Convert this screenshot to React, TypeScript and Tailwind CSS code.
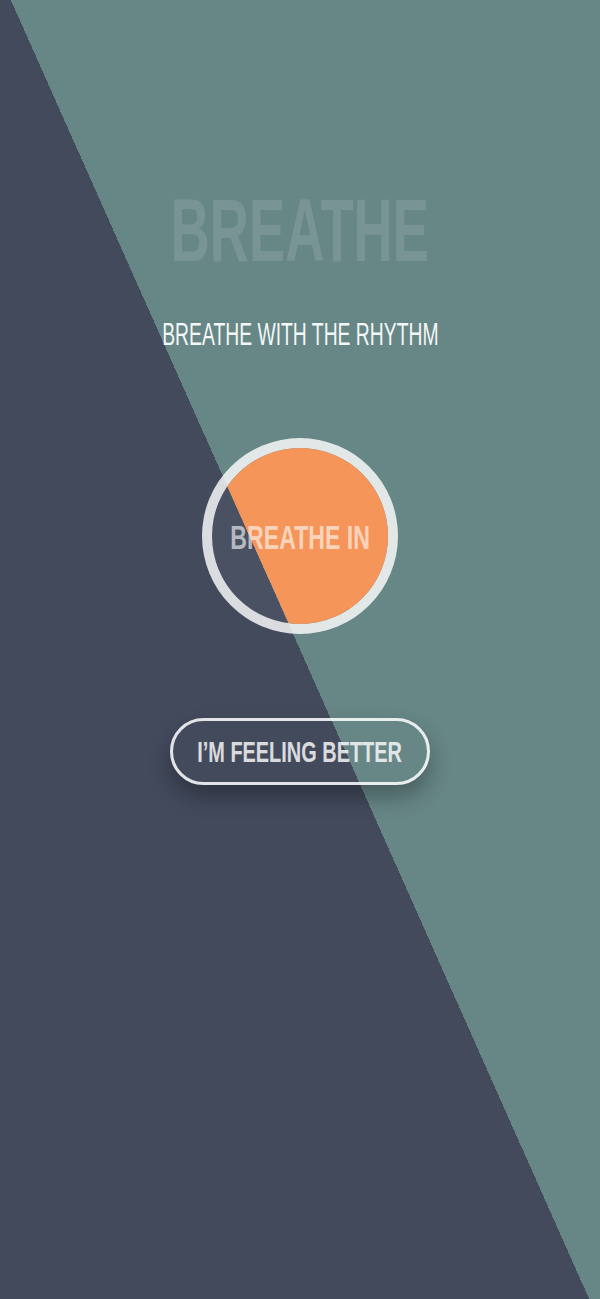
import React from 'react';

const font = { fontFamily: '"Liberation Sans", Arial, sans-serif' };

const App: React.FC = () => {
  return (
    <div
      style={font}
      className="relative h-[1299px] w-full overflow-hidden bg-[linear-gradient(66deg,#434a5c_50%,#678686_50%)] flex flex-col items-center"
    >
      {/* title */}
      <div className="mt-[186px] h-[89px] leading-none text-[89px] font-bold text-white/[0.12] scale-x-[0.61] whitespace-nowrap">
        BREATHE
      </div>

      {/* subtitle */}
      <div className="mt-[45px] h-[31px] leading-none text-[30.7px] text-[#f4f7f7] scale-x-[0.63] whitespace-nowrap">
        BREATHE WITH THE RHYTHM
      </div>

      {/* breathing circle */}
      <div className="mt-[87px] relative w-[196px] h-[196px] rounded-full border-[10px] border-white/80 bg-white/[0.04] flex items-center justify-center">
        <div className="absolute inset-0 rounded-full bg-[#f5955a] [clip-path:polygon(-2px_0,100%_0,100%_100%,77px_100%)]" />
        <span className="relative mt-[4px] leading-none text-[33.5px] font-bold text-white/60 scale-x-[0.69] whitespace-nowrap">
          BREATHE IN
        </span>
      </div>

      {/* button */}
      <button className="mt-[84px] w-[260px] h-[67px] rounded-full border-[3px] border-white/85 shadow-[0_12px_22px_rgba(0,0,0,0.3)] flex items-center justify-center">
        <span className="leading-none text-[29.3px] font-bold text-white/80 scale-x-[0.68] whitespace-nowrap">
          I’M FEELING BETTER
        </span>
      </button>
    </div>
  );
};

export default App;
